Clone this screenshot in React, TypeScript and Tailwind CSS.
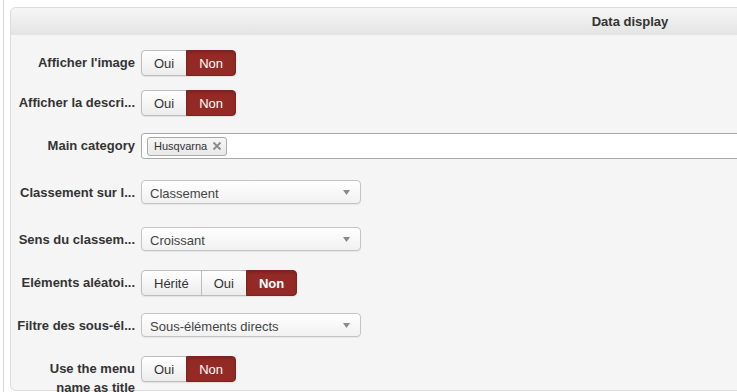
import React from 'react';

const font = { fontFamily: '"Liberation Sans", Arial, Helvetica, sans-serif' };

interface ToggleProps {
  options: string[];
  active: number;
  boldActive?: boolean;
}

const Toggle: React.FC<ToggleProps> = ({ options, active, boldActive }) => (
  <div className="flex h-[26px] rounded-[4px] shadow-[0_1px_1px_rgba(0,0,0,0.08)]">
    {options.map((o, i) => {
      const first = i === 0;
      const last = i === options.length - 1;
      const on = i === active;
      return (
        <div
          key={o}
          className={[
            'flex items-center justify-center px-3 text-[13px] leading-none border',
            first ? 'rounded-l-[4px]' : '-ml-px',
            last ? 'rounded-r-[4px]' : '',
            on
              ? 'bg-[#942a25] border-[#7e2420] text-white shadow-[inset_0_2px_3px_rgba(0,0,0,0.15)]'
              : 'bg-gradient-to-b from-white to-[#ececec] border-[#bdbdbd] text-[#333]',
            on && boldActive ? 'font-bold' : '',
          ].join(' ')}
        >
          {o}
        </div>
      );
    })}
  </div>
);

const Select: React.FC<{ value: string }> = ({ value }) => (
  <div className="flex items-center justify-between w-[220px] h-[24px] pl-[8px] pr-[10px] rounded-[4px] border border-[#c4c4c4] bg-gradient-to-b from-white to-[#f1f1f1] shadow-[0_1px_1px_rgba(0,0,0,0.06)]">
    <span className="text-[13px] text-[#444] pt-[3px]">{value}</span>
    <svg width="7" height="5" viewBox="0 0 7 5">
      <path d="M0 0 L7 0 L3.5 5 Z" fill="#8a8a8a" />
    </svg>
  </div>
);

// labels are cut the way the form shows them
const Row: React.FC<{ label: string; wrap?: boolean; mt: string; children: React.ReactNode }> = ({
  label,
  wrap,
  mt,
  children,
}) => (
  <div className={`flex items-start ${mt}`}>
    <div
      className={`w-[121px] shrink-0 text-right text-[13px] font-bold text-[#333] leading-[19px] pt-[3px] ${
        wrap ? 'whitespace-normal pl-[20px]' : 'whitespace-nowrap'
      }`}
    >
      {label}
    </div>
    <div className="ml-[6px]">{children}</div>
  </div>
);

export default function App() {
  return (
    <div className="w-[737px] h-[392px] overflow-hidden bg-white" style={font}>
      <div className="ml-[3px] h-full border-l border-[#d6d6d6] pl-[6px] pt-[7px]">
        <div className="w-[1240px] h-[384px] rounded-[6px] border border-[#dcdcdc] bg-[#f5f5f5]">
          <div className="h-[27px] rounded-t-[6px] flex items-center justify-center bg-gradient-to-b from-[#f6f6f6] to-[#e4e4e4] text-[13px] font-bold text-[#333]">
            Data display
          </div>
          <div className="pl-[3px] pt-[15px]">
            <Row label="Afficher l'image" mt="mt-0">
              <Toggle options={['Oui', 'Non']} active={1} />
            </Row>
            <Row label="Afficher la descri..." mt="mt-[14px]">
              <Toggle options={['Oui', 'Non']} active={1} />
            </Row>
            <Row label="Main category" mt="mt-[17px]">
              <div className="flex items-center w-[700px] h-[26px] rounded-l-[3px] border border-[#aaa] bg-white pl-[5px]">
                <div className="flex items-center h-[19px] pl-[6px] pr-[4px] rounded-[3px] border border-[#aaa] bg-gradient-to-b from-[#f6f6f6] to-[#e9e9e9] text-[11px] text-[#333]">
                  <span>Husqvarna</span>
                  <svg width="10" height="10" viewBox="0 0 10 10" className="ml-[5px]">
                    <path d="M1.5 1.5 L8.5 8.5 M8.5 1.5 L1.5 8.5" stroke="#8a8a8a" strokeWidth="1.8" />
                  </svg>
                </div>
              </div>
            </Row>
            <Row label="Classement sur l..." mt="mt-[21px]">
              <Select value="Classement" />
            </Row>
            <Row label="Sens du classem..." mt="mt-[23px]">
              <Select value="Croissant" />
            </Row>
            <Row label="Eléments aléatoi..." mt="mt-[19px]">
              <Toggle options={['Hérité', 'Oui', 'Non']} active={2} boldActive />
            </Row>
            <Row label="Filtre des sous-él..." mt="mt-[17px]">
              <Select value="Sous-éléments directs" />
            </Row>
            <Row label="Use the menu name as title" wrap mt="mt-[19px]">
              <Toggle options={['Oui', 'Non']} active={1} />
            </Row>
          </div>
        </div>
      </div>
    </div>
  );
}
